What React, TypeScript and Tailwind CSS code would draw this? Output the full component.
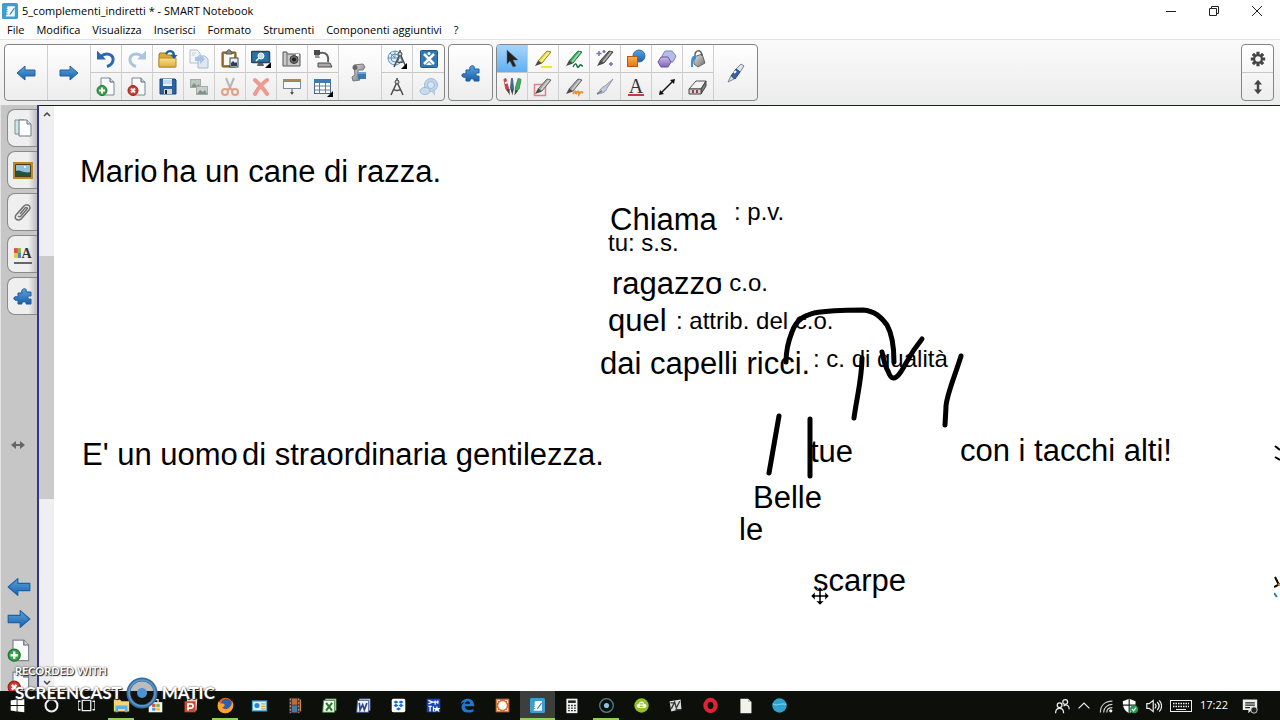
import React from 'react'
import clsx from 'clsx'

type IconProps = { children: React.ReactNode; size?: string; box?: string }

const Icon = ({ children, size = 'size-5', box = '0 0 20 20' }: IconProps) => (
  <svg viewBox={box} className={clsx('shrink-0', size)} fill="none" aria-hidden="true">
    {children}
  </svg>
)

const Gradients = () => (
  <svg className="absolute size-0" aria-hidden="true">
    <defs>
      <linearGradient id="blue" x1="0" y1="0" x2="0" y2="1">
        <stop offset="0" stopColor="#5aa5e0" />
        <stop offset="1" stopColor="#1b5fa8" />
      </linearGradient>
      <linearGradient id="steel" x1="0" y1="0" x2="1" y2="1">
        <stop offset="0" stopColor="#e4e4e4" />
        <stop offset="1" stopColor="#6c6c6c" />
      </linearGradient>
      <linearGradient id="folder" x1="0" y1="0" x2="0" y2="1">
        <stop offset="0" stopColor="#f9e08c" />
        <stop offset="1" stopColor="#e0ae3c" />
      </linearGradient>
      <linearGradient id="orange" x1="0" y1="0" x2="0" y2="1">
        <stop offset="0" stopColor="#fbb04c" />
        <stop offset="1" stopColor="#e87414" />
      </linearGradient>
      <linearGradient id="violet" x1="0" y1="0" x2="0" y2="1">
        <stop offset="0" stopColor="#c9bdea" />
        <stop offset="1" stopColor="#7d63b8" />
      </linearGradient>
    </defs>
  </svg>
)

/* Notebook icons */

const ArrowRight = ({ size, flip }: { size?: string; flip?: boolean }) => (
  <Icon size={size}>
    <path
      d="M1 7h10V3l8 7-8 7v-4H1z"
      fill="url(#blue)"
      stroke="#1c62a8"
      strokeLinejoin="round"
      transform={flip ? 'translate(20 0) scale(-1 1)' : undefined}
    />
  </Icon>
)

const Undo = () => (
  <Icon>
    <path d="M5 7.500c5-5 13-2 12 4-.5 3-3 5-6 6" stroke="#2b68ae" strokeWidth="3" />
    <path d="M1 1.500v9h9z" fill="#2b68ae" />
  </Icon>
)

const Redo = () => (
  <Icon>
    <path d="M15 7.500c-5-5-13-2-12 4 .5 3 3 5 6 6" stroke="#a9c6e0" strokeWidth="3" />
    <path d="M19 1.500v9h-9z" fill="#a9c6e0" />
  </Icon>
)

const Open = () => (
  <Icon>
    <path d="M1 18V5l1-1h5l2 2h8v12z" fill="#d9a93a" stroke="#a87d1c" />
    <path d="M1 18V9h17v9z" fill="url(#folder)" stroke="#b88b28" />
    <path d="M8 5c2-4 7-4 8 1" stroke="#235f9e" strokeWidth="2.400" />
    <path d="M12.500 6h7L16 10z" fill="#235f9e" />
  </Icon>
)

const Copy = () => (
  <Icon>
    <path d="M1 1h7l3 3v10H1z" fill="#f3f6f9" stroke="#b4bfcb" />
    <path d="M9 7h7l3 3v9H9z" fill="#dfe8f2" stroke="#a9b8c8" />
    <path d="M6 8h5V5l5 5-5 5v-3H6z" fill="#a9c4e2" />
    <path d="M3 4h4M3 6h3" stroke="#c3ccd6" />
  </Icon>
)

const Paste = () => (
  <Icon>
    <rect x="2" y="3" width="14" height="15" rx="1" fill="#a87b3c" stroke="#70501f" />
    <rect x="4" y="5" width="10" height="11" fill="#fbfaf5" />
    <path d="M6 5V3h1c0-3 4-3 4 0h1v2z" fill="#8b8b8b" stroke="#555" />
    <rect x="10" y="9" width="8" height="9" fill="#e9f1f6" stroke="#444" />
    <path d="M11 17v-3l2-2 2 2 1-1 1 1v3z" fill="#22445c" />
  </Icon>
)

const Screen = () => (
  <Icon>
    <rect x="0.500" y="2.500" width="18" height="11" rx="1" fill="#2474ae" stroke="#36434f" strokeWidth="1.500" />
    <path d="M6 17h7l-1-3H7z" fill="#58626b" />
    <circle cx="10" cy="7" r="3" fill="#bfe0f4" stroke="#fff" />
    <path d="M8 9l-3 3" stroke="#fff" strokeWidth="1.500" />
    <path d="M20 13v6h-6z" fill="#000" />
  </Icon>
)

const Camera = () => (
  <Icon>
    <path d="M1 3h4v2h13v12H1z" fill="#c9c9c9" stroke="#555" />
    <path d="M5 5v12" stroke="#8a8a8a" strokeWidth="1.500" />
    <circle cx="12" cy="10.500" r="4" fill="#707070" stroke="#3b3b3b" />
    <circle cx="12" cy="10.500" r="2" fill="#1c1c1c" />
    <path d="M14 5h3v2h-3z" fill="#fff" />
  </Icon>
)

const DocCamera = () => (
  <Icon>
    <path d="M7 4c6-1 9 2 8 9" stroke="#5e5e5e" strokeWidth="2" />
    <path d="M1 1h6v5H1z" fill="#4a4a4a" />
    <path d="M2 6h4l1 3H2z" fill="#9a9a9a" />
    <path d="M5 14h12l2 4H5z" fill="#a9a9a9" stroke="#4c4c4c" />
  </Icon>
)

const AddPage = ({ size }: { size?: string }) => (
  <Icon size={size}>
    <path d="M5 1h9l4 4v13H5z" fill="#fafbfc" stroke="#7d8791" />
    <path d="M14 1v4h4" fill="#d3d9de" stroke="#5d6770" />
    <circle cx="6" cy="13.500" r="5" fill="#39a04a" stroke="#1f7431" />
    <path d="M6 10.500v6M3 13.500h6" stroke="#fff" strokeWidth="2" />
  </Icon>
)

const DeletePage = ({ size }: { size?: string }) => (
  <Icon size={size}>
    <path d="M5 1h9l4 4v13H5z" fill="#fafbfc" stroke="#7d8791" />
    <path d="M14 1v4h4" fill="#d3d9de" stroke="#5d6770" />
    <circle cx="6" cy="13.500" r="5" fill="#d2382c" stroke="#98221a" />
    <path d="M4 11.500l4 4M8 11.500l-4 4" stroke="#fff" strokeWidth="2" />
  </Icon>
)

const Save = () => (
  <Icon>
    <path d="M2 2h15l1 1v14H2z" fill="#2b639f" stroke="#1b4577" />
    <path d="M5 2h9v7H5z" fill="#e8f1f8" />
    <path d="M5 4h9M5 6h9" stroke="#9cc0dc" />
    <path d="M6 12h8v5H6z" fill="#cfd5da" />
    <path d="M7 13h2v4H7z" fill="#222" />
  </Icon>
)

const Gallery = () => (
  <Icon>
    <rect x="1.500" y="2.500" width="10" height="8" fill="#bcc6c2" stroke="#a4aaa4" />
    <path d="M2 10l3-4 3 3 2-2 1 3z" fill="#7f9188" />
    <rect x="7.500" y="9.500" width="11" height="8" fill="#c6cfd0" stroke="#a4aaa4" />
    <path d="M8 17l3-4 3 2 2-2 2 4z" fill="#80908a" />
  </Icon>
)

const Cut = () => (
  <Icon>
    <path d="M6 1l5 12M14 1L9 13" stroke="#b4b8bc" strokeWidth="2" />
    <circle cx="5" cy="15" r="3" stroke="#e0a184" strokeWidth="2" />
    <circle cx="15" cy="15" r="3" stroke="#e0a184" strokeWidth="2" />
    <path d="M7 13l3-2 3 2" stroke="#e0a184" strokeWidth="2" />
  </Icon>
)

const Cross = () => (
  <Icon>
    <path d="M4 3c3 3 9 9 12 14M16 3C12 6 7 11 4 17" stroke="#ee9a93" strokeWidth="4" strokeLinecap="round" />
  </Icon>
)

const Shade = () => (
  <Icon>
    <path d="M1 2h18v2H1z" fill="#a98a50" />
    <rect x="1.500" y="4.500" width="17" height="7" fill="#f5f9fb" stroke="#7c8a94" />
    <path d="M10 12v5" stroke="#555" />
    <path d="M8 15h4l-2 3z" fill="#555" />
  </Icon>
)

const TableIcon = () => (
  <Icon>
    <rect x="1.500" y="2.500" width="16" height="14" fill="#fff" stroke="#4c6275" />
    <path d="M1 2h17v4H1z" fill="#3b7cb4" />
    <path d="M1 9h17M1 13h17M6.500 6v11M12.500 6v11" stroke="#5f7d95" />
    <path d="M20 14v6h-6z" fill="#000" />
  </Icon>
)

const DocCameraLarge = () => (
  <Icon>
    <path d="M4 2l9-1 2 3-2 3H8v7l2 3-7 1-1-4 3-2z" fill="url(#steel)" stroke="#777" />
    <circle cx="5" cy="4.500" r="2.500" fill="#666" />
    <path d="M8 9h8v7H8z" fill="#3778b5" />
    <path d="M8 9h8v2H8z" fill="#6aa5d8" />
  </Icon>
)

const Compasses = () => (
  <>
    <path d="M10 1v3M10 5L4 18M10 5l6 13M6 12c2 2 6 2 8 0" stroke="#4b4b4b" strokeWidth="1.500" />
    <circle cx="10" cy="5" r="2" fill="#d0d0d0" stroke="#444" />
  </>
)

const Measure = () => (
  <Icon>
    <circle cx="8" cy="9" r="7" fill="#e0edf6" stroke="#5b93bd" />
    <circle cx="8" cy="9" r="4" stroke="#5b93bd" />
    <path d="M1 9h14M8 2v7M3 4l5 5" stroke="#5b93bd" />
    <g transform="translate(3 0)">
      <Compasses />
    </g>
    <path d="M20 14v6h-6z" fill="#000" />
  </Icon>
)

const Exchange = () => (
  <Icon>
    <rect x="1.500" y="1.500" width="17" height="17" rx="1" fill="#3377b3" stroke="#1f588e" />
    <path d="M5 5l10 10M15 5L5 15" stroke="#fff" strokeWidth="2.500" />
    <circle cx="10" cy="4.500" r="1.500" fill="#fff" />
    <path d="M7 16h6l-3-3z" fill="#fff" />
  </Icon>
)

const Bubbles = () => (
  <Icon>
    <circle cx="12" cy="8" r="6.500" fill="#bfd6ea" stroke="#9dbcd8" />
    <circle cx="12" cy="8" r="3.500" fill="#d8e6f2" stroke="#9dbcd8" />
    <ellipse cx="6" cy="14" rx="5" ry="3.500" fill="#c9dced" stroke="#9dbcd8" />
    <path d="M12 14l4 5v-5z" fill="#b4cde4" />
  </Icon>
)

const Puzzle = () => (
  <Icon>
    <path
      d="M5 7h4c-2-5 6-6 4-1h5v4c-4-1-4 4 0 3v5h-5c1-3-5-3-4 0H5v-4c-5 2-6-5 0-3z"
      fill="url(#blue)"
      stroke="#1d5a9b"
    />
  </Icon>
)

const Pointer = () => (
  <Icon>
    <path d="M5 1v14l3-3 3 6 3-1-3-6h5z" fill="#222" stroke="#666" strokeWidth="0.500" />
  </Icon>
)

type PenProps = { body: string; edge: string; children?: React.ReactNode }

const Pen = ({ body, edge, children }: PenProps) => (
  <Icon>
    {children}
    <path d="M14 2l4 1L9 14l-4-2z" fill={body} stroke={edge} strokeLinejoin="round" />
    <path d="M16 3L8 13" stroke="#fff" strokeOpacity="0.500" strokeWidth="1.500" />
    <path d="M5 11.500l4 3L2 17z" fill="#4a4a4a" />
  </Icon>
)

const Highlighter = () => (
  <Pen body="#ece23a" edge="#8a8427">
    <path d="M8 18h11" stroke="#f1e62a" strokeWidth="2" />
  </Pen>
)

const Crayon = () => (
  <Pen body="#3fae62" edge="#1f7a3c">
    <path d="M9 18c2-4 3-4 4-1s2 0 3-1 1 1 3 1" stroke="#1f6d4a" strokeWidth="1.500" />
  </Pen>
)

const MagicPen = () => (
  <Pen body="#686868" edge="#444">
    <path d="M4 2v5M1.500 4.500h5M9 1v3M7.500 2.500h3M16 13v4M14 15h4" stroke="#7870b8" strokeWidth="1.500" />
  </Pen>
)

const Shapes = () => (
  <Icon>
    <circle cx="13" cy="7" r="6" fill="url(#blue)" stroke="#2f6da6" />
    <rect x="1.500" y="7.500" width="10" height="10" fill="url(#orange)" stroke="#b5590f" />
  </Icon>
)

const Polygons = () => (
  <Icon>
    <path d="M8 2h7l4 5-3 6H9L5 7z" fill="#b4bde6" stroke="#7e86bc" />
    <path d="M4 8h7l3 5-3 5H4l-3-5z" fill="url(#violet)" stroke="#6a519f" />
  </Icon>
)

const Fill = () => (
  <Icon>
    <path d="M6 8l8-3 3 9-7 4-4-3z" fill="url(#steel)" stroke="#666" />
    <path d="M7 8C6 0 14 0 14 7" stroke="#5c5c5c" strokeWidth="1.500" />
    <path d="M8 7C3 6 3 10 3 18h2c0-5 0-7 3-8z" fill="#3a8fd0" />
  </Icon>
)

const Pens = () => (
  <Icon box="0 0 21 20">
    <path d="M2 2l2-1 3 11v4l-3-4z" fill="#d23a3f" stroke="#b84a4e" />
    <path d="M3 6l3-1" stroke="#fff" strokeWidth="2" />
    <path d="M10 1h1l1 10-1 5-2-5z" fill="#3f6d94" stroke="#3c6285" />
    <path d="M17 1l3 1-2 10-4 4v-5z" fill="#43a862" stroke="#3d8f57" />
    <path d="M5 12l3 7V12zM9 12l2 7 1-7zM14 13l-1 6 4-5z" fill="#444" />
  </Icon>
)

const ShapePen = () => (
  <Pen body="#a5a5a5" edge="#666">
    <rect x="1.500" y="7.500" width="11" height="11" stroke="#e0808c" strokeWidth="1.500" />
  </Pen>
)

const TextPen = () => (
  <Pen body="#9d9d9d" edge="#666">
    <path d="M9 17c2-4 3-3 3 0 2-4 3-3 3 0 2-3 3-2 4-1" stroke="#e2923c" strokeWidth="2" />
  </Pen>
)

const Brush = () => (
  <Icon>
    <path d="M18 2L10 9c-4 1-4 4-8 8 6-1 9-2 10-6z" fill="#c4cbda" stroke="#8c95a8" />
    <path d="M2 17l5-3" stroke="#7b8498" strokeWidth="1.500" />
  </Icon>
)

const TextTool = () => (
  <span className="flex w-4 flex-col items-center border-b-2 border-[#c43a40] font-['Liberation_Serif',serif] text-[20px] leading-4 text-[#333]">
    A
  </span>
)

const LineTool = () => (
  <Icon>
    <path d="M4 16L16 4" stroke="#111" strokeWidth="1.500" />
    <path d="M2 18l1-5 4 4zM18 2l-1 5-4-4z" fill="#111" />
  </Icon>
)

const Eraser = () => (
  <Icon>
    <path d="M1 12L8 4h10l-5 8z" fill="#f3f3f3" stroke="#555" strokeLinejoin="round" />
    <path d="M13 12l5-8v5l-5 8z" fill="#7c7c7c" stroke="#444" strokeLinejoin="round" />
    <path d="M1 12h12v5H1z" fill="#d6d6d6" stroke="#444" />
    <path d="M4 13h2v3H4zM8 13h2v3H8z" fill="#a33c4a" />
  </Icon>
)

const Marker = () => (
  <Icon>
    <path d="M15 1l3 2-4 6-4-3z" fill="#dfe4ea" stroke="#78828e" />
    <path d="M10 6l4 3-5 7-4-3z" fill="#2f62a8" stroke="#214b85" />
    <path d="M8 10l2-2" stroke="#fff" strokeWidth="2" />
    <path d="M5 13l3 3-6 3z" fill="#dfe4ea" stroke="#78828e" />
  </Icon>
)

const Gear = () => (
  <Icon size="size-4">
    <g stroke="#444" strokeWidth="4">
      <path d="M10 1v18M1 10h18M3.600 3.600l12.800 12.800M16.400 3.600L3.600 16.400" />
    </g>
    <circle cx="10" cy="10" r="6" fill="#444" />
    <circle cx="10" cy="10" r="3.500" fill="#f6f6f6" />
  </Icon>
)

const MoveToolbar = () => (
  <Icon size="size-4">
    <path d="M10 5v10" stroke="#444" strokeWidth="3" />
    <path d="M5 7l5-6 5 6zM5 13l5 6 5-6z" fill="#444" />
  </Icon>
)

const PagesTab = () => (
  <Icon>
    <path d="M2 2h9v14H2z" fill="#cfe6ea" stroke="#71959b" />
    <path d="M6 2h8l4 4v12H6z" fill="#fafcfd" stroke="#6e7b84" />
    <path d="M14 2v4h4" fill="#d3dbe0" stroke="#6e7b84" />
  </Icon>
)

const GalleryTab = () => (
  <Icon>
    <rect x="1" y="3" width="18" height="15" fill="#8fc3dc" stroke="#b98a2c" strokeWidth="2" />
    <path d="M2 17v-5c4-4 7 2 16 0v5z" fill="#24533d" />
    <path d="M2.500 4.500h15v12h-15z" stroke="#4e3c14" />
    <circle cx="12" cy="7" r="1" fill="#fff" />
  </Icon>
)

const ClipTab = () => (
  <Icon>
    <path
      d="M4 12l7-8c3-3 8 0 5 4l-7 8c-3 4-9 1-6-3l7-8M5 14c1 1 2 1 3 0l6-7c1-1 0-2-2-1l-5 6"
      stroke="#707070"
      strokeWidth="1.500"
    />
  </Icon>
)

const PropertiesTab = () => (
  <span className="relative flex h-5 w-[18px] items-start border-b-2 border-[#666]">
    <svg viewBox="0 0 8 12" className="mt-1 h-3 w-2" aria-hidden="true">
      <path d="M0 0h4v5H0z" fill="#d9534a" />
      <path d="M4 0h4v5H4z" fill="#8cb84a" />
      <path d="M0 5h4v5H0z" fill="#e9c63c" />
      <path d="M4 5h4v5H4z" fill="#4b87c0" />
    </svg>
    <span className="font-['Liberation_Serif',serif] text-sm font-bold leading-5 text-[#333]">A</span>
  </span>
)

const NotebookIcon = ({ size }: { size: string }) => (
  <Icon size={size}>
    <rect width="20" height="20" rx="2" fill="#3b9fd2" />
    <path d="M6 4h10v13H5z" fill="#f2f9fc" />
    <path d="M5 5h2M5 8h2M5 11h2M5 14h2" stroke="#25729e" />
    <path d="M15 6l-5 7-1 2 2-1 5-7z" fill="#2a7dac" />
  </Icon>
)

/* Toolbar */

type Tool = { label: string; icon: React.ReactNode; active?: boolean }

const ToolButton = ({ label, icon, active }: Tool) => (
  <button
    aria-label={label}
    className={clsx(
      'flex w-full flex-1 items-center justify-center',
      active ? 'bg-linear-to-b from-[#a5d5fb] to-[#5fb0f2]' : 'hover:bg-sky-100'
    )}
  >
    {icon}
  </button>
)

const Column = ({ tools, wide }: { tools: Tool[]; wide?: boolean }) => (
  <div className={clsx('flex flex-col divide-y divide-[#c8c8c8]', wide ? 'w-[43px]' : 'w-[31px]')}>
    {tools.map((tool) => (
      <ToolButton key={tool.label} {...tool} />
    ))}
  </div>
)

const Group = ({ children }: { children: React.ReactNode }) => (
  <div className="flex h-[57px] divide-x divide-[#cfcfcf] overflow-hidden rounded border border-[#858585] bg-linear-to-b from-white to-[#ededed]">
    {children}
  </div>
)

const editColumns: Tool[][] = [
  [{ label: 'Annulla', icon: <Undo /> }, { label: 'Aggiungi pagina', icon: <AddPage /> }],
  [{ label: 'Ripeti', icon: <Redo /> }, { label: 'Elimina pagina', icon: <DeletePage /> }],
  [{ label: 'Apri', icon: <Open /> }, { label: 'Salva', icon: <Save /> }],
  [{ label: 'Copia', icon: <Copy /> }, { label: 'Raccolta', icon: <Gallery /> }],
  [{ label: 'Incolla', icon: <Paste /> }, { label: 'Taglia', icon: <Cut /> }],
  [{ label: 'Vista', icon: <Screen /> }, { label: 'Elimina', icon: <Cross /> }],
  [{ label: 'Cattura schermo', icon: <Camera /> }, { label: 'Tendina', icon: <Shade /> }],
  [{ label: 'Document camera', icon: <DocCamera /> }, { label: 'Tabella', icon: <TableIcon /> }],
]

const measureColumns: Tool[][] = [
  [
    { label: 'Strumenti di misura', icon: <Measure /> },
    { label: 'Compasso', icon: <Icon><Compasses /></Icon> },
  ],
  [{ label: 'Exchange', icon: <Exchange /> }, { label: 'Risposte', icon: <Bubbles /> }],
]

const drawColumns: Tool[][] = [
  [{ label: 'Seleziona', icon: <Pointer />, active: true }, { label: 'Penne', icon: <Pens /> }],
  [{ label: 'Evidenziatore', icon: <Highlighter /> }, { label: 'Penna forme', icon: <ShapePen /> }],
  [{ label: 'Pastello', icon: <Crayon /> }, { label: 'Penna testo', icon: <TextPen /> }],
  [{ label: 'Penna magica', icon: <MagicPen /> }, { label: 'Pennello', icon: <Brush /> }],
  [{ label: 'Forme', icon: <Shapes /> }, { label: 'Testo', icon: <TextTool /> }],
  [{ label: 'Poligoni', icon: <Polygons /> }, { label: 'Linee', icon: <LineTool /> }],
  [{ label: 'Riempimento', icon: <Fill /> }, { label: 'Gomma', icon: <Eraser /> }],
]

const Toolbar = () => (
  <div className="flex gap-[3px] border-t border-[#e3e3e3] bg-linear-to-b from-[#fafafa] to-[#ececec] pt-1 pb-1 pl-1 pr-[6px]">
    <Group>
      <Column wide tools={[{ label: 'Pagina precedente', icon: <ArrowRight flip /> }]} />
      <Column wide tools={[{ label: 'Pagina successiva', icon: <ArrowRight /> }]} />
      {editColumns.map((tools) => (
        <Column key={tools[0].label} tools={tools} />
      ))}
      <Column wide tools={[{ label: 'Mixed Reality', icon: <DocCameraLarge /> }]} />
      {measureColumns.map((tools) => (
        <Column key={tools[0].label} tools={tools} />
      ))}
    </Group>
    <Group>
      <Column wide tools={[{ label: 'Componenti', icon: <Puzzle /> }]} />
    </Group>
    <Group>
      {drawColumns.map((tools) => (
        <Column key={tools[0].label} tools={tools} />
      ))}
      <Column wide tools={[{ label: 'Pennarello', icon: <Marker /> }]} />
    </Group>
    <div className="ml-auto">
      <Group>
        <Column
          tools={[
            { label: 'Personalizza', icon: <Gear /> },
            { label: 'Sposta barra', icon: <MoveToolbar /> },
          ]}
        />
      </Group>
    </div>
  </div>
)

/* Window chrome */

const TitleBar = () => (
  <header className="flex h-[22px] items-center bg-white px-[2px]">
    <NotebookIcon size="size-4" />
    <h1 className="ml-1 text-[11px]">5_complementi_indiretti * - SMART Notebook</h1>
    <div className="ml-auto flex">
      <button aria-label="Riduci a icona" className="flex w-[43px] justify-center">
        <Icon size="size-[10px]" box="0 0 10 10"><path d="M0 5.500h10" stroke="#222" /></Icon>
      </button>
      <button aria-label="Ripristina" className="flex w-[43px] justify-center">
        <Icon size="size-[10px]" box="0 0 10 10">
          <path d="M0.500 2.500h7v7h-7zM2.500 2.500v-2h7v7h-2" stroke="#222" />
        </Icon>
      </button>
      <button aria-label="Chiudi" className="flex w-[43px] justify-center">
        <Icon size="size-[10px]" box="0 0 10 10"><path d="M0 0l10 10M10 0L0 10" stroke="#222" /></Icon>
      </button>
    </div>
  </header>
)

const menus = ['File', 'Modifica', 'Visualizza', 'Inserisci', 'Formato', 'Strumenti', 'Componenti aggiuntivi', '?']

const MenuBar = () => (
  <nav className="flex h-[17px] items-center gap-3 bg-white pl-[7px] text-[11px]">
    {menus.map((menu) => (
      <button key={menu}>{menu}</button>
    ))}
  </nav>
)

const tabs: Tool[] = [
  { label: 'Ordinatore pagine', icon: <PagesTab /> },
  { label: 'Raccolta', icon: <GalleryTab /> },
  { label: 'Allegati', icon: <ClipTab /> },
  { label: 'Proprietà', icon: <PropertiesTab /> },
  { label: 'Componenti aggiuntivi', icon: <Puzzle /> },
]

const Sidebar = () => (
  <aside className="flex w-[39px] shrink-0 flex-col border-r-2 border-l border-r-[#34348c] border-l-[#e4e4e4] bg-[#c6c6c6]">
    <div className="flex flex-col gap-1 pt-1 pl-[6px]">
      {tabs.map((tab) => (
        <button
          key={tab.label}
          aria-label={tab.label}
          className="flex h-[38px] items-center justify-center rounded-l-lg border border-r-0 border-[#8a8a8a] bg-linear-to-r from-[#efefef] from-70% to-[#bdbdbd]"
        >
          {tab.icon}
        </button>
      ))}
    </div>
    <div className="flex flex-1 items-center justify-center pr-[2px]">
      <Icon size="h-3 w-[14px]" box="0 0 14 12">
        <path d="M4 6h6" stroke="#666" strokeWidth="2" />
        <path d="M0 6l5-4v8zM14 6L9 2v8z" fill="#666" />
      </Icon>
    </div>
    <div className="-mb-1 flex flex-col items-center gap-2">
      <button aria-label="Indietro"><ArrowRight size="size-6" flip /></button>
      <button aria-label="Avanti"><ArrowRight size="size-6" /></button>
      <button aria-label="Nuova pagina"><AddPage size="size-6" /></button>
      <button aria-label="Rimuovi pagina"><DeletePage size="size-6" /></button>
    </div>
  </aside>
)

const Chevron = ({ down }: { down?: boolean }) => (
  <Icon size="size-2" box="0 0 8 8">
    <path d={down ? 'M1 2l3 3 3-3' : 'M1 6l3-3 3 3'} stroke="#444" strokeWidth="1.500" />
  </Icon>
)

const ScrollBar = () => (
  <div className="flex w-[15px] shrink-0 flex-col items-center bg-[#efeff1] py-1">
    <Chevron />
    <div className="w-full basis-[24%]" />
    <div className="w-full basis-[42%] bg-[#cbcbcb]" />
    <div className="mt-auto flex">
      <Chevron down />
    </div>
  </div>
)

/* Page content, free placement */

const large = [
  { text: 'Mario', at: 'left-[26px] top-[50px]' },
  { text: 'ha un cane di razza.', at: 'left-[108px] top-[50px]' },
  { text: 'Chiama', at: 'left-[556px] top-[98px]' },
  { text: 'ragazzo', at: 'left-[558px] top-[162px]' },
  { text: 'quel', at: 'left-[554px] top-[199px]' },
  { text: 'dai capelli ricci.', at: 'left-[546px] top-[242px]' },
  { text: "E' un uomo", at: 'left-[28px] top-[333px]' },
  { text: 'di straordinaria gentilezza.', at: 'left-[188px] top-[333px]' },
  { text: 'tue', at: 'left-[756px] top-[330px]' },
  { text: 'con i tacchi alti!', at: 'left-[906px] top-[329px]' },
  { text: 'Belle', at: 'left-[699px] top-[376px]' },
  { text: 'le', at: 'left-[685px] top-[408px]' },
  { text: 'scarpe', at: 'left-[759px] top-[459px]' },
]

const small = [
  { text: ': p.v.', at: 'left-[680px] top-[94px]' },
  { text: 'tu: s.s.', at: 'left-[554px] top-[125px]' },
  { text: ': c.o.', at: 'left-[662px] top-[165px]' },
  { text: ': attrib. del c.o.', at: 'left-[622px] top-[203px]' },
  { text: ': c. di qualità', at: 'left-[759px] top-[241px]' },
]

const strokes = [
  'M732 256c0-8 2-20 6-30 5-14 13-16 22-19 16-3 34-3 49-3 12 1 18 7 24 15 5 9 7 24 7 37',
  'M828 246c2 8 3 15 6 19 3 9 7 9 12 2 6-8 8-17 22-34',
  'M808 252c0 20-5 38-8 60',
  'M907 250c-5 17-15 40-15 51l-1 18',
  'M725 310l-10 57',
  'M756 313v57',
]

const Page = () => (
  <main className="relative flex-1 overflow-hidden bg-white font-['Liberation_Sans',Arial,sans-serif] whitespace-nowrap text-black">
    {large.map(({ text, at }) => (
      <p key={text} className={clsx('absolute text-[31px] leading-none', at)}>{text}</p>
    ))}
    {small.map(({ text, at }) => (
      <p key={text} className={clsx('absolute text-[24px] leading-none', at)}>{text}</p>
    ))}
    <svg className="absolute inset-0 size-full" fill="none" aria-hidden="true">
      <g stroke="#000" strokeWidth="5" strokeLinecap="round" strokeLinejoin="round">
        {strokes.map((d) => (
          <path key={d} d={d} />
        ))}
      </g>
      <g transform="translate(766 490)">
        <path d="M0-9l4 4H1v4h4v-3l4 4-4 4V1H1v4h3L0 9l-4-4h3V1h-4v3l-4-4 4-4v3h4v-4h-3z" fill="#000" stroke="#fff" strokeWidth="0.500" />
      </g>
    </svg>
    <svg className="absolute top-[339px] right-0 h-[154px] w-[6px]" viewBox="0 0 6 154" fill="none" aria-hidden="true">
      <path d="M1 1l5 4M1 12l5 3M1 132l4 8M0 142l6-3" stroke="#000" strokeWidth="2" />
      <path d="M0 148l3 4" stroke="#3b74b0" strokeWidth="2" />
      <path d="M4 139l2 1" stroke="#d98a2c" strokeWidth="2" />
    </svg>
  </main>
)

const Watermark = () => (
  <div className="pointer-events-none absolute bottom-[11px] left-[15px] font-[Lato,sans-serif] font-bold text-white [text-shadow:1px_1px_1px_#222,0_0_2px_#444]">
    <p className="text-[11px] leading-3">RECORDED WITH</p>
    <div className="flex items-center gap-1 text-[17px] leading-8">
      <span>SCREENCAST</span>
      <Icon size="size-8" box="0 0 32 32">
        <circle cx="16" cy="16" r="13.500" fill="#222" fillOpacity="0.300" stroke="#3a6c9c" strokeWidth="4" />
        <circle cx="16" cy="16" r="13" stroke="#5b9bd2" strokeWidth="1.500" />
        <circle cx="16" cy="16" r="5" fill="#4d93d4" />
      </Icon>
      <span>MATIC</span>
    </div>
  </div>
)

/* Taskbar */

type App = { name: string; icon: React.ReactNode; open?: boolean; current?: boolean }

const apps: App[] = [
  {
    name: 'Start',
    icon: <path d="M2 4l7-1v6.500H2zM10 3l8-1v7.500h-8zM2 10.500h7V17l-7-1zM10 10.500h8V18l-8-1z" fill="#fff" />,
  },
  { name: 'Cortana', icon: <circle cx="10" cy="10" r="7" stroke="#eee" strokeWidth="2.500" /> },
  {
    name: 'Visualizzazione attività',
    icon: <path d="M5 4h10v12H5zM3 5H0v10h3M17 5h3v10h-3" stroke="#eee" strokeWidth="1.500" />,
  },
  {
    name: 'Esplora file',
    open: true,
    icon: (
      <>
        <path d="M1 3h7l2 2h9v12H1z" fill="#f6d673" />
        <path d="M3 10h14v8h-3v-4H6v4H3z" fill="#56b3e4" />
      </>
    ),
  },
  {
    name: 'Store',
    icon: (
      <>
        <path d="M2 6h16v12H2z" fill="#f4f4f4" />
        <path d="M7 6V3h6v3" stroke="#f4f4f4" strokeWidth="1.500" />
        <path d="M6 8h4v4H6z" fill="#e0563b" />
        <path d="M11 8h4v4h-4z" fill="#7fb43b" />
        <path d="M6 13h4v3H6z" fill="#3b9bdc" />
        <path d="M11 13h4v3h-4z" fill="#f0b93a" />
      </>
    ),
  },
  {
    name: 'PowerPoint',
    icon: (
      <>
        <path d="M6 2h12l-1 14H5z" fill="#f4ddd6" />
        <rect x="3" y="5" width="13" height="13" fill="#cb4a32" />
        <path d="M7 16V8h3c4 0 4 5 0 5H7" stroke="#fff" strokeWidth="2" />
      </>
    ),
  },
  {
    name: 'Firefox',
    open: true,
    icon: (
      <>
        <circle cx="10" cy="10" r="9" fill="#e9601e" />
        <circle cx="11" cy="8" r="6" fill="#2c5fae" />
        <path d="M2 5c2 5 5 1 7 4 0 3-2 2-3 3 2 4 8 3 11-3 2-3 1-5 0-7 4 6 3 16-7 17C1 19-1 11 2 5z" fill="#f8a72c" />
      </>
    ),
  },
  {
    name: 'Pannello di controllo',
    icon: (
      <>
        <rect x="1" y="4" width="18" height="13" fill="#4aa4dc" />
        <rect x="2.500" y="5.500" width="15" height="10" fill="#d9effa" />
        <circle cx="7" cy="10" r="3" fill="#2f83c4" />
        <path d="M12 8h5M12 11h5M12 14h5" stroke="#e0a33c" strokeWidth="1.500" />
      </>
    ),
  },
  {
    name: 'Movie Maker',
    icon: (
      <>
        <path d="M4 1h12v18H4z" fill="#46393a" />
        <path d="M7 2h6v7H7z" fill="#c26a36" />
        <path d="M7 10h6v8H7z" fill="#4778a6" />
        <path d="M5 2v17M15 2v17" stroke="#d6c6b0" strokeDasharray="2 2" />
        <path d="M17 3v14" stroke="#d28a34" strokeWidth="1.500" />
      </>
    ),
  },
  {
    name: 'Excel',
    icon: (
      <>
        <path d="M5 2h13v14H5z" fill="#a8d09a" />
        <path d="M3 4h13v14H2z" fill="#f3f8f0" stroke="#3f8a40" />
        <path d="M6 7l7 9M13 7l-7 9" stroke="#2b7a33" strokeWidth="2.500" />
      </>
    ),
  },
  {
    name: 'Word',
    icon: (
      <>
        <path d="M5 2h13v14H5z" fill="#a9bce0" />
        <path d="M3 4h13v14H2z" fill="#f1f4fb" stroke="#40589c" />
        <path d="M5 7l1 8 3-6 2 6 3-8" stroke="#2c478e" strokeWidth="2" />
      </>
    ),
  },
  {
    name: 'Dropbox',
    icon: (
      <>
        <rect x="2" y="2" width="16" height="16" rx="2" fill="#fff" />
        <path d="M7 4l3 2-3 2-3-2zM13 4l3 2-3 2-3-2zM7 8l3 2-3 2-3-2zM13 8l3 2-3 2-3-2zM10 12l3 2-3 2-3-2z" fill="#1c6fd8" />
      </>
    ),
  },
  {
    name: 'Lavagna',
    icon: (
      <>
        <rect x="2" y="2" width="16" height="16" fill="#1742b8" />
        <path d="M4 4l5 2-5 2M12 4v5M10 6h6M15 4v4M4 11h4M6 11v6M10 11v6" stroke="#fff" strokeWidth="1.500" />
        <path d="M14 10l1 3h3l-2 2 1 3-3-2-3 2 1-3-2-2h3z" fill="#fff" />
      </>
    ),
  },
  {
    name: 'Edge',
    icon: <path d="M2 9c1-9 16-10 16 2H7c0 5 6 5 10 3v3C10 20 3 18 3 12c0-3 2-5 4-6-3 0-4 1-5 3zm5-1h6c0-4-5-4-6 0z" fill="#2079cc" />,
  },
  {
    name: 'Registratore',
    icon: (
      <>
        <rect x="2" y="2" width="16" height="16" fill="#d8702c" />
        <circle cx="10" cy="10" r="5" fill="#fff" />
        <path d="M4 7V4h3M13 4h3v3M16 13v3h-3M7 16H4v-3" stroke="#fff" />
      </>
    ),
  },
  { name: 'SMART Notebook', current: true, icon: null },
  {
    name: 'Calcolatrice',
    icon: (
      <>
        <rect x="4" y="2" width="13" height="17" fill="#f2f2f2" />
        <path d="M6 4h9v3H6z" fill="#222" />
        <path d="M6 10h9M6 13h9M6 16h9" stroke="#222" strokeWidth="1.500" strokeDasharray="2 1.500" />
      </>
    ),
  },
  {
    name: 'Screencast',
    open: true,
    icon: (
      <>
        <circle cx="10" cy="10" r="8" stroke="#4d8590" strokeWidth="1.500" />
        <circle cx="10" cy="10" r="3" fill="#8cc4dc" />
      </>
    ),
  },
  {
    name: 'Sicurezza',
    icon: (
      <>
        <circle cx="10" cy="10" r="8.500" fill="#93c126" />
        <path d="M6 13c-3-2-1-5 1-5 1-4 6-3 6 0 3 0 4 4 1 5z" fill="#fff" />
        <path d="M8 8h4M8 11h4" stroke="#93c126" strokeWidth="1.500" />
      </>
    ),
  },
  {
    name: 'Strumenti grafici',
    icon: (
      <>
        <path d="M3 5l13-2 1 11-12 3z" fill="#d9d9d9" />
        <path d="M5 14l4-8 2 7 4-8M4 7h5M10 15h7" stroke="#333" strokeWidth="1.500" />
      </>
    ),
  },
  { name: 'Opera', icon: <ellipse cx="10" cy="10" rx="6" ry="6.500" stroke="#df2333" strokeWidth="5" /> },
  {
    name: 'Documento',
    icon: (
      <>
        <path d="M4 2h9l4 4v13H4z" fill="#f2f2ec" />
        <path d="M13 2v4h4" fill="#b9b9b4" />
      </>
    ),
  },
  {
    name: 'Browser',
    icon: (
      <>
        <circle cx="10" cy="10" r="8.500" fill="#2ea3cf" />
        <path d="M2 8c5 4 10-2 16 1" stroke="#6cc8e4" strokeWidth="1.500" />
      </>
    ),
  },
]

const tray = [
  {
    name: 'Contatti',
    size: 'size-4',
    icon: (
      <>
        <circle cx="7" cy="9" r="3" stroke="#eee" strokeWidth="1.500" />
        <path d="M2 19c0-8 10-8 10 0" stroke="#eee" strokeWidth="1.500" />
        <circle cx="14" cy="5" r="3" stroke="#eee" strokeWidth="1.500" />
        <path d="M12 10c4-3 7 0 7 4" stroke="#eee" strokeWidth="1.500" />
      </>
    ),
  },
  { name: 'Icone nascoste', size: 'size-3', icon: <path d="M1 14l9-9 9 9" stroke="#eee" strokeWidth="2" /> },
  {
    name: 'Rete',
    size: 'size-4',
    icon: (
      <>
        <path d="M3 18C3 9 9 4 18 4M7 18c0-6 5-10 11-10M11 18c0-4 3-6 7-6" stroke="#ccc" strokeWidth="1.500" />
        <circle cx="16" cy="16" r="2" fill="#eee" />
      </>
    ),
  },
  {
    name: 'Sicurezza',
    size: 'size-4',
    icon: (
      <>
        <path d="M9 1l8 3c0 8-2 12-8 15C3 16 1 12 1 4z" fill="#fff" />
        <path d="M9 1v18M1 9h16" stroke="#222" strokeWidth="1.500" />
        <circle cx="15" cy="14" r="5" fill="#1f9f54" />
        <path d="M12.500 14l2 2 3-4" stroke="#fff" strokeWidth="1.500" />
      </>
    ),
  },
  {
    name: 'Volume',
    size: 'size-4',
    icon: (
      <path d="M1 7h3l5-4v14l-5-4H1zM11 7c2 2 2 4 0 6M14 5c3 3 3 7 0 10M16.500 3c4 4 4 10 0 14" stroke="#eee" strokeWidth="1.500" />
    ),
  },
]

const Taskbar = () => (
  <footer className="flex h-[29px] shrink-0 items-stretch justify-between bg-[#0d0f0a] text-white">
    <div className="flex w-[797px]">
      {apps.map(({ name, icon, open, current }) => (
        <button
          key={name}
          aria-label={name}
          className={clsx('flex flex-1 flex-col items-center justify-between', current && 'bg-[#3c3f3c]')}
        >
          <span className="flex flex-1 items-center pt-[2px]">
            {current ? <NotebookIcon size="size-[15px]" /> : <Icon size="size-[17px]">{icon}</Icon>}
          </span>
          <span
            className={clsx('h-[2px]', current ? 'w-full' : 'w-[26px]', (open || current) && 'bg-[#8fd05a]')}
          />
        </button>
      ))}
    </div>
    <div className="flex items-center gap-2 pr-[22px]">
      {tray.map(({ name, size, icon }) => (
        <button key={name} aria-label={name}>
          <Icon size={size}>{icon}</Icon>
        </button>
      ))}
      <button aria-label="Tastiera">
        <Icon size="h-3 w-[22px]" box="0 0 22 12">
          <rect x="0.500" y="0.500" width="21" height="11" stroke="#eee" />
          <path d="M3 3.500h16M3 6.500h16" stroke="#eee" strokeWidth="1.500" strokeDasharray="1.500 1" />
          <path d="M6 9.500h10" stroke="#eee" />
        </Icon>
      </button>
      <time className="text-[11px]">17:22</time>
      <button aria-label="Centro notifiche" className="ml-[6px]">
        <Icon size="size-4">
          <path d="M1 2h18v13h-7l-4 4v-4H1z" fill="#eee" />
          <path d="M4 6h12M4 9h12M4 12h6" stroke="#222" strokeWidth="1.500" />
          <circle cx="15" cy="15" r="4" fill="#222" stroke="#eee" />
        </Icon>
      </button>
    </div>
  </footer>
)

const App = () => {
  return (
    <div className="relative flex h-screen flex-col overflow-hidden font-['Open_Sans','Noto_Sans',sans-serif] text-black">
      <Gradients />
      <TitleBar />
      <MenuBar />
      <Toolbar />
      <div className="flex min-h-0 flex-1">
        <Sidebar />
        <div className="flex min-w-0 flex-1 border-t border-[#14145c]">
          <ScrollBar />
          <Page />
        </div>
      </div>
      <Taskbar />
      <Watermark />
    </div>
  )
}

export default App
